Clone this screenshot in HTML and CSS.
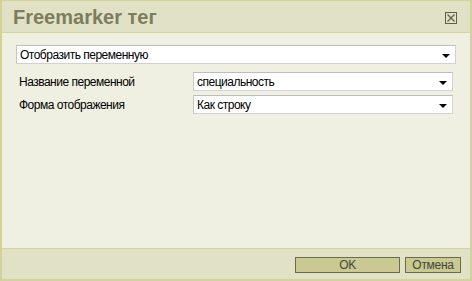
FILE: index.html
```html
<!DOCTYPE html>
<html>
<head>
<meta charset="utf-8">
<link rel="stylesheet" href="styles.css">
</head>
<body>
<div class="dialog">
  <div class="header">
    <span class="title">Freemarker тег</span>
    <span class="close">
      <svg width="12" height="12" viewBox="0 0 12 12"><rect x="0.5" y="0.5" width="11" height="11" fill="none" stroke="#5f5f45" stroke-width="1"/><path d="M2.5 2.5 L9.5 9.5 M9.5 2.5 L2.5 9.5" stroke="#5f5f45" stroke-width="1.2"/></svg>
    </span>
  </div>
  <div class="content">
    <div class="select wide"><span>Отобразить переменную</span><i class="arrow"></i></div>
    <div class="rows">
      <div class="row">
        <span class="label">Название переменной</span>
        <div class="select field"><span>специальность</span><i class="arrow"></i></div>
      </div>
      <div class="row">
        <span class="label">Форма отображения</span>
        <div class="select field"><span>Как строку</span><i class="arrow"></i></div>
      </div>
    </div>
  </div>
  <div class="footer">
    <button class="btn ok">OK</button>
    <button class="btn cancel">Отмена</button>
  </div>
</div>
</body>
</html>
```
FILE: styles.css
```css
html, body { margin: 0; padding: 0; background: #efefe2; }
.dialog {
  box-sizing: border-box;
  width: 472px; height: 281px;
  border: 2px solid #d3d399;
  border-top-width: 1px;
  display: flex; flex-direction: column;
  font-family: "Liberation Sans", Arial, sans-serif;
}
.header {
  height: 31px;
  flex: none;
  background: #e1e1c5;
  border-bottom: 1px solid #d4d49c;
  display: flex; align-items: center; justify-content: space-between;
  padding: 0 13px 0 11px;
}
.title {
  font-weight: bold; font-size: 20px; color: #7d7d5e;
  padding-top: 1px;
}
.close { display: flex; margin-top: 2px; }
.content {
  flex: 1;
  background: #efefe2;
  padding: 12px 14px 0 14px;
}
.select {
  box-sizing: border-box;
  height: 19px;
  background: #fff;
  border: 1px solid #d2d2d2;
  border-top-color: #bdbdbd;
  border-left-color: #c6c6c6;
  display: flex; align-items: center; justify-content: space-between;
  padding: 0 5px 0 3px;
  font-size: 12px; color: #000;
  letter-spacing: -0.5px;
}
.arrow {
  width: 0; height: 0;
  border-left: 4px solid transparent;
  border-right: 4px solid transparent;
  border-top: 4px solid #000;
  margin-top: 2px;
}
.rows { margin-top: 8px; display: flex; flex-direction: column; gap: 4px; }
.row { display: flex; align-items: center; padding-left: 3px; padding-right: 3px; }
.label { width: 174px; font-size: 12px; letter-spacing: -0.5px; color: #000; }
.field { flex: 1; }
.footer {
  height: 22px; flex: none;
  background: #e1e1c5;
  border-top: 1px solid #d4d49c;
  display: flex; justify-content: flex-end; align-items: flex-start;
  padding: 8px 9px 0 0;
  gap: 5px;
  box-sizing: content-box;
}
.btn {
  box-sizing: border-box;
  height: 16px;
  margin: 0; padding: 0;
  background: #c9c991;
  border: 1px solid #6b6b52;
  font-family: "Liberation Sans", Arial, sans-serif;
  font-size: 12px; color: #45453a;
  line-height: 14px;
  letter-spacing: -0.3px;
}
.ok { width: 105px; }
.cancel { width: 56px; }
```
